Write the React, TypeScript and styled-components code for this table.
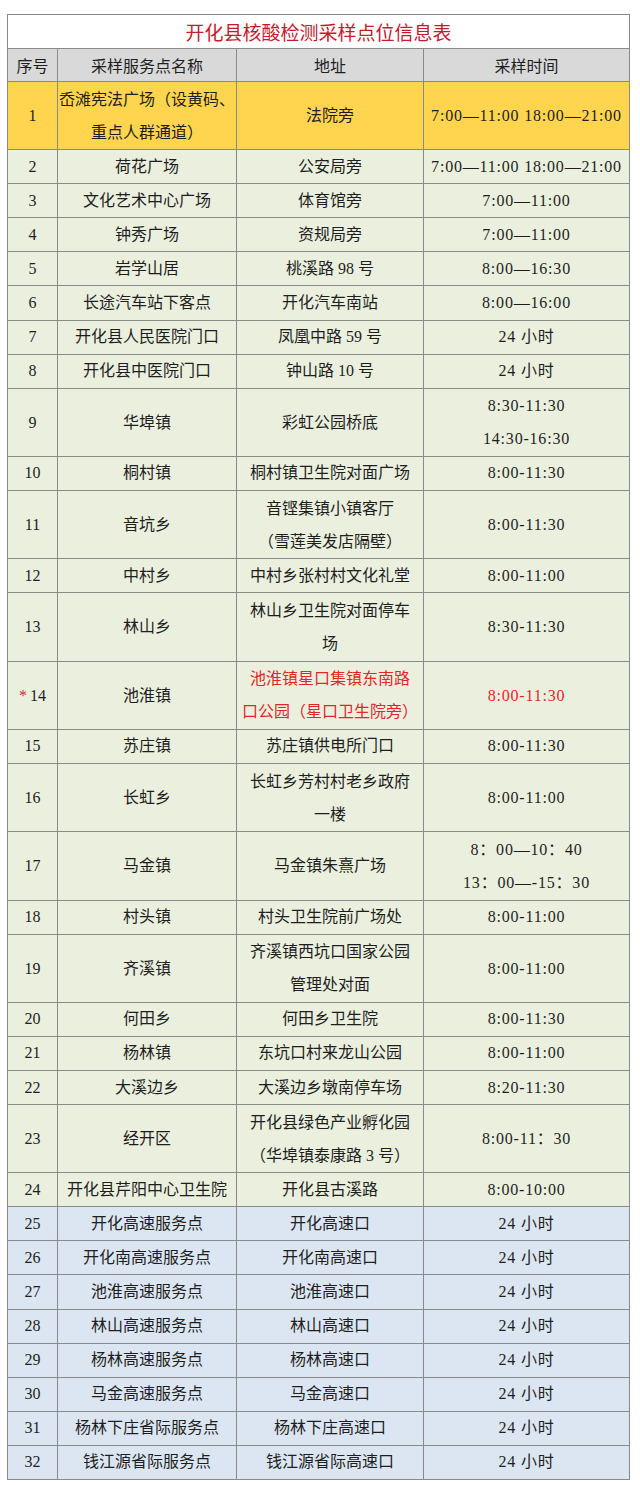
import React from 'react';
import styled, { createGlobalStyle } from 'styled-components';

type Tone = 'plain' | 'yellow' | 'blue';

type Row = {
  no: string;
  name: string[];
  addr: string[];
  time: string[];
  tone?: Tone;
  star?: boolean;
  red?: boolean;
  tall?: boolean;
};

const rows: Row[] = [
  { no: '1', name: ['岙滩宪法广场（设黄码、', '重点人群通道）'], addr: ['法院旁'], time: ['7:00—11:00 18:00—21:00'], tone: 'yellow', tall: true },
  { no: '2', name: ['荷花广场'], addr: ['公安局旁'], time: ['7:00—11:00 18:00—21:00'] },
  { no: '3', name: ['文化艺术中心广场'], addr: ['体育馆旁'], time: ['7:00—11:00'] },
  { no: '4', name: ['钟秀广场'], addr: ['资规局旁'], time: ['7:00—11:00'] },
  { no: '5', name: ['岩学山居'], addr: ['桃溪路 98 号'], time: ['8:00—16:30'] },
  { no: '6', name: ['长途汽车站下客点'], addr: ['开化汽车南站'], time: ['8:00—16:00'] },
  { no: '7', name: ['开化县人民医院门口'], addr: ['凤凰中路 59 号'], time: ['24 小时'] },
  { no: '8', name: ['开化县中医院门口'], addr: ['钟山路 10 号'], time: ['24 小时'] },
  { no: '9', name: ['华埠镇'], addr: ['彩虹公园桥底'], time: ['8:30-11:30', '14:30-16:30'], tall: true },
  { no: '10', name: ['桐村镇'], addr: ['桐村镇卫生院对面广场'], time: ['8:00-11:30'] },
  { no: '11', name: ['音坑乡'], addr: ['音铿集镇小镇客厅', '（雪莲美发店隔壁）'], time: ['8:00-11:30'], tall: true },
  { no: '12', name: ['中村乡'], addr: ['中村乡张村村文化礼堂'], time: ['8:00-11:00'] },
  { no: '13', name: ['林山乡'], addr: ['林山乡卫生院对面停车', '场'], time: ['8:30-11:30'], tall: true },
  { no: '14', name: ['池淮镇'], addr: ['池淮镇星口集镇东南路', '口公园（星口卫生院旁）'], time: ['8:00-11:30'], tall: true, star: true, red: true },
  { no: '15', name: ['苏庄镇'], addr: ['苏庄镇供电所门口'], time: ['8:00-11:30'] },
  { no: '16', name: ['长虹乡'], addr: ['长虹乡芳村村老乡政府', '一楼'], time: ['8:00-11:00'], tall: true },
  { no: '17', name: ['马金镇'], addr: ['马金镇朱熹广场'], time: ['8：00—10：40', '13：00—-15：30'], tall: true },
  { no: '18', name: ['村头镇'], addr: ['村头卫生院前广场处'], time: ['8:00-11:00'] },
  { no: '19', name: ['齐溪镇'], addr: ['齐溪镇西坑口国家公园', '管理处对面'], time: ['8:00-11:00'], tall: true },
  { no: '20', name: ['何田乡'], addr: ['何田乡卫生院'], time: ['8:00-11:30'] },
  { no: '21', name: ['杨林镇'], addr: ['东坑口村来龙山公园'], time: ['8:00-11:00'] },
  { no: '22', name: ['大溪边乡'], addr: ['大溪边乡墩南停车场'], time: ['8:20-11:30'] },
  { no: '23', name: ['经开区'], addr: ['开化县绿色产业孵化园', '（华埠镇泰康路 3 号）'], time: ['8:00-11：30'], tall: true },
  { no: '24', name: ['开化县芹阳中心卫生院'], addr: ['开化县古溪路'], time: ['8:00-10:00'] },
  { no: '25', name: ['开化高速服务点'], addr: ['开化高速口'], time: ['24 小时'], tone: 'blue' },
  { no: '26', name: ['开化南高速服务点'], addr: ['开化南高速口'], time: ['24 小时'], tone: 'blue' },
  { no: '27', name: ['池淮高速服务点'], addr: ['池淮高速口'], time: ['24 小时'], tone: 'blue' },
  { no: '28', name: ['林山高速服务点'], addr: ['林山高速口'], time: ['24 小时'], tone: 'blue' },
  { no: '29', name: ['杨林高速服务点'], addr: ['杨林高速口'], time: ['24 小时'], tone: 'blue' },
  { no: '30', name: ['马金高速服务点'], addr: ['马金高速口'], time: ['24 小时'], tone: 'blue' },
  { no: '31', name: ['杨林下庄省际服务点'], addr: ['杨林下庄高速口'], time: ['24 小时'], tone: 'blue' },
  { no: '32', name: ['钱江源省际服务点'], addr: ['钱江源省际高速口'], time: ['24 小时'], tone: 'blue' },
];

const toneBg: Record<Tone, string> = {
  plain: '#ebf0de',
  yellow: '#ffd54f',
  blue: '#dce6f2',
};

const GlobalStyle = createGlobalStyle`
  html, body {
    margin: 0;
    padding: 0;
    background: #fff;
  }
`;

const Page = styled.div`
  padding: 14px 0 0 7px;
  font-family: 'Liberation Serif', 'Noto Sans CJK SC', serif;
  color: #1e1e1e;
`;

const Table = styled.table`
  width: 622px;
  border-collapse: collapse;
  table-layout: fixed;
  border: 1px solid #8a8a8a;
`;

const Title = styled.th`
  height: 33px;
  padding: 0;
  background: #fff;
  color: #c41a2e;
  font-size: 19px;
  font-weight: 400;
  border: 1px solid #8a8a8a;
`;

const Head = styled.th`
  height: 32px;
  padding: 0;
  background: #d9d9d9;
  font-size: 16px;
  font-weight: 400;
  border: 1px solid #8a8a8a;
`;

const Cell = styled.td<{ $tone: Tone; $tall?: boolean; $red?: boolean; $time?: boolean }>`
  height: ${(p) => (p.$tall ? 67.3 : 33.05)}px;
  padding: 0;
  text-align: center;
  vertical-align: middle;
  font-size: 16px;
  line-height: ${(p) => (p.$tall ? '33px' : '20px')};
  letter-spacing: ${(p) => (p.$time ? '0.8px' : '0')};
  white-space: nowrap;
  background: ${(p) => toneBg[p.$tone]};
  color: ${(p) => (p.$red ? '#e3262c' : '#1e1e1e')};
  border: 1px solid #8a8a8a;
`;

const Star = styled.span`
  color: #d42a2a;
  margin-right: 3px;
`;

function Lines({ items }: { items: string[] }) {
  return (
    <>
      {items.map((t, i) => (
        <React.Fragment key={i}>
          {i > 0 && <br />}
          {t}
        </React.Fragment>
      ))}
    </>
  );
}

export default function App() {
  return (
    <Page>
      <GlobalStyle />
      <Table>
        <colgroup>
          <col style={{ width: 50 }} />
          <col style={{ width: 179 }} />
          <col style={{ width: 187 }} />
          <col style={{ width: 206 }} />
        </colgroup>
        <thead>
          <tr>
            <Title colSpan={4}>开化县核酸检测采样点位信息表</Title>
          </tr>
          <tr>
            <Head>序号</Head>
            <Head>采样服务点名称</Head>
            <Head>地址</Head>
            <Head>采样时间</Head>
          </tr>
        </thead>
        <tbody>
          {rows.map((r) => {
            const tone = r.tone ?? 'plain';
            return (
              <tr key={r.no}>
                <Cell $tone={tone} $tall={r.tall}>
                  {r.star && <Star>*</Star>}
                  {r.no}
                </Cell>
                <Cell $tone={tone} $tall={r.tall}>
                  <Lines items={r.name} />
                </Cell>
                <Cell $tone={tone} $tall={r.tall} $red={r.red}>
                  <Lines items={r.addr} />
                </Cell>
                <Cell $tone={tone} $tall={r.tall} $red={r.red} $time>
                  <Lines items={r.time} />
                </Cell>
              </tr>
            );
          })}
        </tbody>
      </Table>
    </Page>
  );
}
